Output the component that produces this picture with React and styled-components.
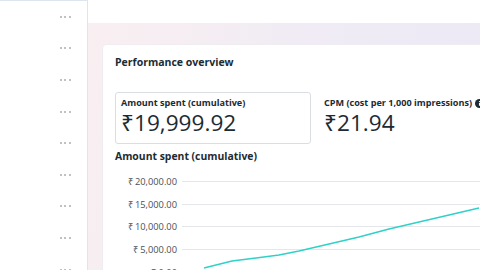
import styled, { createGlobalStyle } from "styled-components";

const Global = createGlobalStyle`
  html, body {
    margin: 0;
    padding: 0;
    background: #ffffff;
    font-family: "Open Sans", "Liberation Sans", sans-serif;
    color: #1c2b33;
  }
  #root {
    width: 480px;
    height: 270px;
    overflow: hidden;
  }
`;

const Page = styled.div`
  display: flex;
  flex-direction: row;
  width: 480px;
  height: 270px;
  overflow: hidden;
`;

const Sidebar = styled.div`
  width: 88px;
  flex-shrink: 0;
  border-right: 1px solid #dfe5ef;
  border-top: 1px solid #dfe5ef;
  box-sizing: border-box;
  display: flex;
  flex-direction: column;
`;

const SideRow = styled.div`
  height: 31.6px;
  flex-shrink: 0;
  display: flex;
  align-items: center;
  justify-content: flex-end;
  padding-right: 16px;
`;

const Dots = styled.div`
  display: flex;
  gap: 2.6px;
  & span {
    width: 2px;
    height: 2px;
    border-radius: 50%;
    background: #a9adb3;
  }
`;

const Main = styled.div`
  flex: 1;
  min-width: 0;
  padding-top: 23px;
  display: flex;
`;

const Backdrop = styled.div`
  flex: 1;
  min-width: 0;
  padding: 22px 0 0 15px;
  background: linear-gradient(100deg, #f9eff1 0%, #f1ecf4 45%, #ebe9f6 100%);
  display: flex;
`;

const Card = styled.div`
  flex: 1;
  min-width: 0;
  background: #ffffff;
  border-top-left-radius: 4px;
  box-shadow: 0 0 0 1px #efedf2;
  padding: 10px 0 0 12px;
  white-space: nowrap;
  overflow: hidden;
`;

const Title = styled.div`
  font-size: 10.5px;
  font-weight: 700;
  line-height: 15px;
`;

const Metrics = styled.div`
  display: flex;
  gap: 12px;
  margin-top: 22px;
`;

const Metric = styled.div`
  flex-shrink: 0;
  width: ${(p) => (p.$w ? p.$w + "px" : "auto")};
  height: 52px;
  box-sizing: border-box;
  padding: 4px 0 0 ${(p) => (p.$boxed ? 5 : 0)}px;
  border: 1px solid ${(p) => (p.$boxed ? "#dadde1" : "transparent")};
  border-radius: 3px;
  display: flex;
  flex-direction: column;
`;

const MetricLabel = styled.div`
  font-size: 9.1px;
  font-weight: 700;
  line-height: 12px;
  display: flex;
  align-items: center;
  gap: 3px;
`;

const MetricValue = styled.div`
  font-size: 22.6px;
  font-weight: 400;
  line-height: 24px;
  margin-top: 2px;
`;

const ChartTitle = styled.div`
  font-size: 10.4px;
  font-weight: 700;
  line-height: 15px;
  margin-top: 5px;
`;

const Chart = styled.div`
  position: relative;
  margin-top: 6px;
  display: flex;
  flex-direction: column;
`;

const AxisRow = styled.div`
  height: 22.7px;
  display: flex;
  align-items: center;
  gap: 5px;
`;

const AxisLabel = styled.div`
  width: 62px;
  text-align: right;
  font-size: 9.3px;
  color: #4b4f56;
`;

const GridLine = styled.div`
  flex: 1;
  height: 1px;
  background: #e4e6e9;
`;

const Plot = styled.svg`
  position: absolute;
  left: 0;
  top: 0;
  overflow: visible;
`;

const axis = ["₹ 20,000.00", "₹ 15,000.00", "₹ 10,000.00", "₹ 5,000.00", "₹ 0.00"];

// page coordinates, shifted to the chart's origin (116,168)
const pts = [
  [205, 266], [233, 259], [257, 256], [280, 253], [300, 249],
  [330, 242], [360, 235], [390, 227], [420, 220], [450, 213], [480, 206],
].map(([x, y]) => [x - 116, y - 168]);

function InfoIcon() {
  return (
    <svg width="9" height="9" viewBox="0 0 16 16">
      <circle cx="8" cy="8" r="8" fill="#1c2b33" />
      <rect x="7" y="7" width="2" height="5" fill="#fff" />
      <circle cx="8" cy="4.6" r="1.2" fill="#fff" />
    </svg>
  );
}

export default function App() {
  return (
    <Page>
      <Global />
      <Sidebar>
        {Array.from({ length: 9 }).map((_, i) => (
          <SideRow key={i}>
            <Dots>
              <span />
              <span />
              <span />
            </Dots>
          </SideRow>
        ))}
      </Sidebar>
      <Main>
        <Backdrop>
          <Card>
            <Title>Performance overview</Title>
            <Metrics>
              <Metric $boxed $w={196}>
                <MetricLabel>Amount spent (cumulative)</MetricLabel>
                <MetricValue>₹19,999.92</MetricValue>
              </Metric>
              <Metric>
                <MetricLabel>
                  CPM (cost per 1,000 impressions) <InfoIcon />
                </MetricLabel>
                <MetricValue>₹21.94</MetricValue>
              </Metric>
            </Metrics>
            <ChartTitle>Amount spent (cumulative)</ChartTitle>
            <Chart>
              {axis.map((a) => (
                <AxisRow key={a}>
                  <AxisLabel>{a}</AxisLabel>
                  <GridLine />
                </AxisRow>
              ))}
              <Plot width="400" height="120">
                <polyline
                  points={pts.map((p) => p.join(",")).join(" ")}
                  fill="none"
                  stroke="#2fd1c9"
                  strokeWidth="1.4"
                  strokeLinejoin="round"
                />
              </Plot>
            </Chart>
          </Card>
        </Backdrop>
      </Main>
    </Page>
  );
}
